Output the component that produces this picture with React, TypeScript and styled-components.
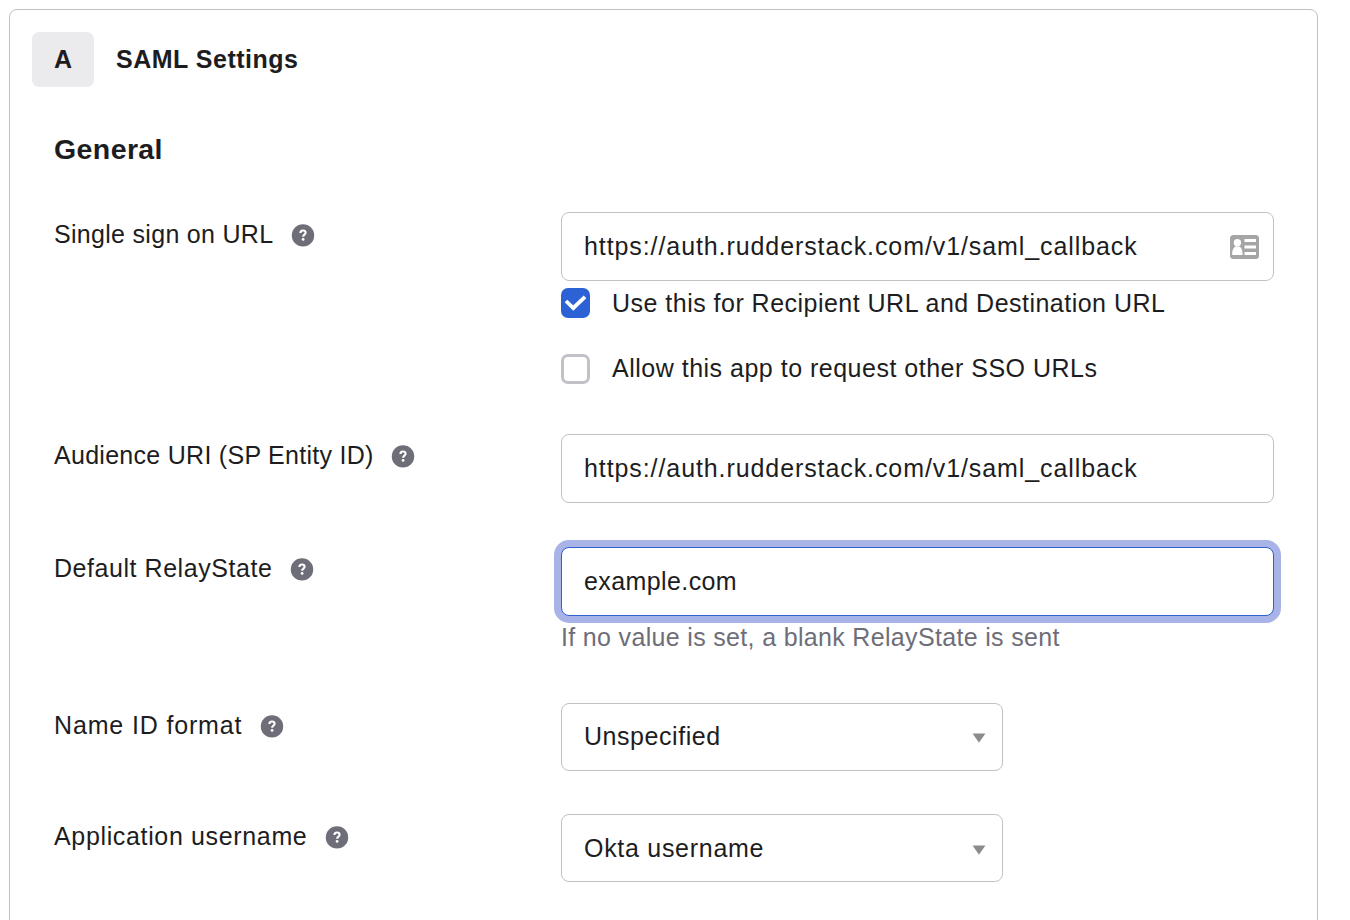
import React from "react";
import styled, { createGlobalStyle } from "styled-components";

const GlobalStyle = createGlobalStyle`
  *, *::before, *::after { box-sizing: border-box; }
  html, body { margin: 0; background: #fff; }
  body {
    height: 920px;
    overflow: hidden;
    color: #1d1d21;
    font-family: "Liberation Sans", Arial, sans-serif;
    font-size: 25px;
    line-height: 30px;
  }
`;

const Page = styled.main`
  height: 920px;
  padding: 9px 32px 0 9px;
  overflow: hidden;
`;

const Card = styled.section`
  height: 940px;
  border: 1px solid #c1c1c8;
  border-radius: 8px;
`;

const CardHeader = styled.header`
  display: flex;
  align-items: center;
  gap: 22px;
  padding: 22px 22px 0;
`;

const StepBadge = styled.span`
  display: grid;
  place-items: center;
  width: 62px;
  height: 55px;
  padding-bottom: 2px;
  border-radius: 7px;
  background: #ebebed;
  font-weight: 700;
`;

const CardTitle = styled.h1`
  margin: 0;
  padding-bottom: 2px;
  font-size: 25px;
  font-weight: 700;
  letter-spacing: 0.5px;
`;

const SectionTitle = styled.h2`
  margin: 44px 0 0 44px;
  font-size: 28.5px;
  line-height: 36px;
  font-weight: 700;
  letter-spacing: 0.4px;
`;

const Form = styled.form`
  padding: 45px 43px 0 44px;
`;

const Row = styled.div<{ $gap: number }>`
  display: grid;
  grid-template-columns: 507px 713px;
  align-items: start;
  margin-bottom: ${(p) => p.$gap}px;
`;

const LabelCell = styled.div<{ $top: number }>`
  display: flex;
  align-items: center;
  padding-top: ${(p) => p.$top}px;
  gap: 18px;

  > span { padding-bottom: 2px; }
  > svg { margin: 0 0 0 -0.4px; }
`;

const Text = styled.span<{ $track: number }>`
  letter-spacing: ${(p) => p.$track}px;
  white-space: nowrap;
`;

const FieldCell = styled.div`
  display: flex;
  flex-direction: column;
`;

const InputBox = styled.div<{ $focused?: boolean }>`
  display: flex;
  align-items: center;
  justify-content: space-between;
  height: 69px;
  padding: 0 14px 0 22px;
  border: 1px solid ${(p) => (p.$focused ? "#2d62cf" : "#c1c1c8")};
  border-radius: 8px;
  background: #fff;
  box-shadow: ${(p) => (p.$focused ? "0 0 0 7px #a8b3e8" : "none")};

  > span { padding-bottom: 2px; }
`;

const SelectBox = styled(InputBox)<{ $nudge?: number }>`
  width: 442px;
  height: 68px;
  padding: ${(p) => p.$nudge ?? 0}px 16px 0 22px;

  > svg { margin-top: 2px; }
`;

const CheckRow = styled.div<{ $top: number; $lift?: number }>`
  display: flex;
  align-items: center;
  gap: 22px;
  height: 30px;
  margin-top: ${(p) => p.$top}px;

  > span:last-child { padding-bottom: ${(p) => p.$lift ?? 0}px; }
`;

const CheckBox = styled.span<{ $checked?: boolean }>`
  display: grid;
  place-items: center;
  width: 29px;
  height: 30px;
  border: ${(p) => (p.$checked ? "0" : "3px solid #c1c1c8")};
  border-radius: 7px;
  background: ${(p) => (p.$checked ? "#2d62d6" : "#fff")};
`;

const Hint = styled.p`
  margin: 6px 0 1px;
  color: #6e6e78;
`;

const HelpIcon = () => (
  <svg width="24" height="24" viewBox="0 0 24 24" aria-hidden="true">
    <circle cx="12" cy="12.4" r="11.2" fill="#6e6e78" />
    <path
      d="M9.4 10C9.4 8.4 10.5 7.5 12 7.5s2.6 .9 2.6 2.3c0 1.8-2.5 1.8-2.5 3.9"
      fill="none"
      stroke="#fff"
      strokeWidth="2.1"
    />
    <circle cx="12.1" cy="16.4" r="1.4" fill="#fff" />
  </svg>
);

const ContactIcon = () => (
  <svg width="29" height="24" viewBox="0 0 29 24" aria-hidden="true">
    <rect width="29" height="24" rx="3.5" fill="#a5a5a5" />
    <circle cx="7.4" cy="7.8" r="3.7" fill="#fff" />
    <path d="M2.2 20v-2.2c0-3.3 1.6-5.2 3.1-6.4h4.2c1.5 1.2 3 3.1 3 6.4V20z" fill="#fff" />
    <path d="M14.5 4h11.5v3H14.5zM14.5 10.5h11.5v3H14.5zM14.5 17h11.5v3H14.5z" fill="#fff" />
  </svg>
);

const CheckIcon = () => (
  <svg width="29" height="30" viewBox="0 0 29 30" aria-hidden="true">
    <path d="M5 13l7.3 7L24 8.9" fill="none" stroke="#fff" strokeWidth="3.8" />
  </svg>
);

const Caret = () => (
  <svg width="14" height="10" viewBox="0 0 14 10" aria-hidden="true">
    <path d="M.6.6h12.8L7 9.8z" fill="#8c8c8c" />
  </svg>
);

const Label = ({ text, track, top = 7 }: { text: string; track: number; top?: number }) => (
  <LabelCell $top={top}>
    <Text $track={track}>{text}</Text>
    <HelpIcon />
  </LabelCell>
);

const CALLBACK_URL = "https://auth.rudderstack.com/v1/saml_callback";

export default function App() {
  return (
    <>
      <GlobalStyle />
      <Page>
        <Card>
          <CardHeader>
            <StepBadge>A</StepBadge>
            <CardTitle>SAML Settings</CardTitle>
          </CardHeader>
          <SectionTitle>General</SectionTitle>
          <Form>
            <Row $gap={50}>
              <Label text="Single sign on URL" track={0.3} />
              <FieldCell>
                <InputBox>
                  <Text $track={0.91}>{CALLBACK_URL}</Text>
                  <ContactIcon />
                </InputBox>
                <CheckRow $top={7}>
                  <CheckBox $checked>
                    <CheckIcon />
                  </CheckBox>
                  <Text $track={0.48}>Use this for Recipient URL and Destination URL</Text>
                </CheckRow>
                <CheckRow $top={36} $lift={2}>
                  <CheckBox />
                  <Text $track={0.5}>Allow this app to request other SSO URLs</Text>
                </CheckRow>
              </FieldCell>
            </Row>
            <Row $gap={44}>
              <Label text="Audience URI (SP Entity ID)" track={0.28} top={6} />
              <InputBox>
                <Text $track={0.91}>{CALLBACK_URL}</Text>
              </InputBox>
            </Row>
            <Row $gap={50}>
              <Label text="Default RelayState" track={0.55} top={6} />
              <FieldCell>
                <InputBox $focused>
                  <Text $track={0.4}>example.com</Text>
                </InputBox>
                <Hint>
                  <Text $track={0.33}>If no value is set, a blank RelayState is sent</Text>
                </Hint>
              </FieldCell>
            </Row>
            <Row $gap={43}>
              <Label text="Name ID format" track={0.85} />
              <SelectBox>
                <Text $track={0.55}>Unspecified</Text>
                <Caret />
              </SelectBox>
            </Row>
            <Row $gap={0}>
              <Label text="Application username" track={0.65} />
              <SelectBox $nudge={2}>
                <Text $track={0.71}>Okta username</Text>
                <Caret />
              </SelectBox>
            </Row>
          </Form>
        </Card>
      </Page>
    </>
  );
}
